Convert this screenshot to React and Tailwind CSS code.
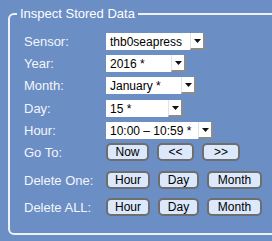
import React from "react";

function Select({ value, width }) {
  return (
    <div className="flex h-[17px] bg-white" style={{ width }}>
      <div className="flex-1 flex items-center pl-[4px] text-[12px] leading-none text-black whitespace-nowrap overflow-hidden">
        {value}
      </div>
      <div className="w-[15px] h-full flex items-center justify-center border-l border-[#e2e2e2] border-r-2 border-b-2 border-r-[#8c8c8c] border-b-[#8c8c8c] bg-white">
        <svg width="7" height="4" viewBox="0 0 7 4">
          <path d="M0 0H7L3.5 4Z" fill="#111" />
        </svg>
      </div>
    </div>
  );
}

function Btn({ children, w }) {
  return (
    <div
      className="h-[18px] flex items-center justify-center rounded-[5px] border-2 border-[#6e6e6e] bg-[#dce8fb] text-[12px] leading-none text-black"
      style={{ width: w }}
    >
      {children}
    </div>
  );
}

function Row({ label, children, className = "" }) {
  return (
    <div className={"flex items-center " + className}>
      <div className="w-[82px] text-[13px] leading-none text-[#f3f6fb]">{label}</div>
      {children}
    </div>
  );
}

export default function App() {
  return (
    <div
      className="w-[272px] h-[241px] overflow-hidden bg-[#6b8ec5] pl-[8px] pt-[6px]"
      style={{ fontFamily: '"Liberation Sans", Arial, sans-serif' }}
    >
      <fieldset className="w-[300px] h-[229px] border-2 border-[#eef2f8] rounded-[6px]">
        <legend className="ml-[7px] px-[3px] text-[13px] leading-[15px] text-white">
          Inspect Stored Data
        </legend>
        <div className="pl-[14px] pt-[12px] flex flex-col">
          <Row label="Sensor:" className="h-[17px]">
            <Select value="thb0seapress" width={99} />
          </Row>
          <Row label="Year:" className="h-[17px] mt-[5px]">
            <Select value="2016 *" width={80} />
          </Row>
          <Row label="Month:" className="h-[17px] mt-[5px]">
            <Select value="January *" width={90} />
          </Row>
          <Row label="Day:" className="h-[17px] mt-[6px]">
            <Select value="15 *" width={77} />
          </Row>
          <Row label="Hour:" className="h-[17px] mt-[5px]">
            <Select value="10:00 – 10:59 *" width={107} />
          </Row>
          <Row label="Go To:" className="h-[18px] mt-[4px]">
            <div className="flex gap-[8px]">
              <Btn w={43}>Now</Btn>
              <Btn w={37}>&lt;&lt;</Btn>
              <Btn w={38}>&gt;&gt;</Btn>
            </div>
          </Row>
          <Row label="Delete One:" className="h-[18px] mt-[10px]">
            <div className="flex gap-[8px]">
              <Btn w={44}>Hour</Btn>
              <Btn w={41}>Day</Btn>
              <Btn w={55}>Month</Btn>
            </div>
          </Row>
          <Row label="Delete ALL:" className="h-[18px] mt-[9px]">
            <div className="flex gap-[8px]">
              <Btn w={44}>Hour</Btn>
              <Btn w={41}>Day</Btn>
              <Btn w={55}>Month</Btn>
            </div>
          </Row>
        </div>
      </fieldset>
    </div>
  );
}
